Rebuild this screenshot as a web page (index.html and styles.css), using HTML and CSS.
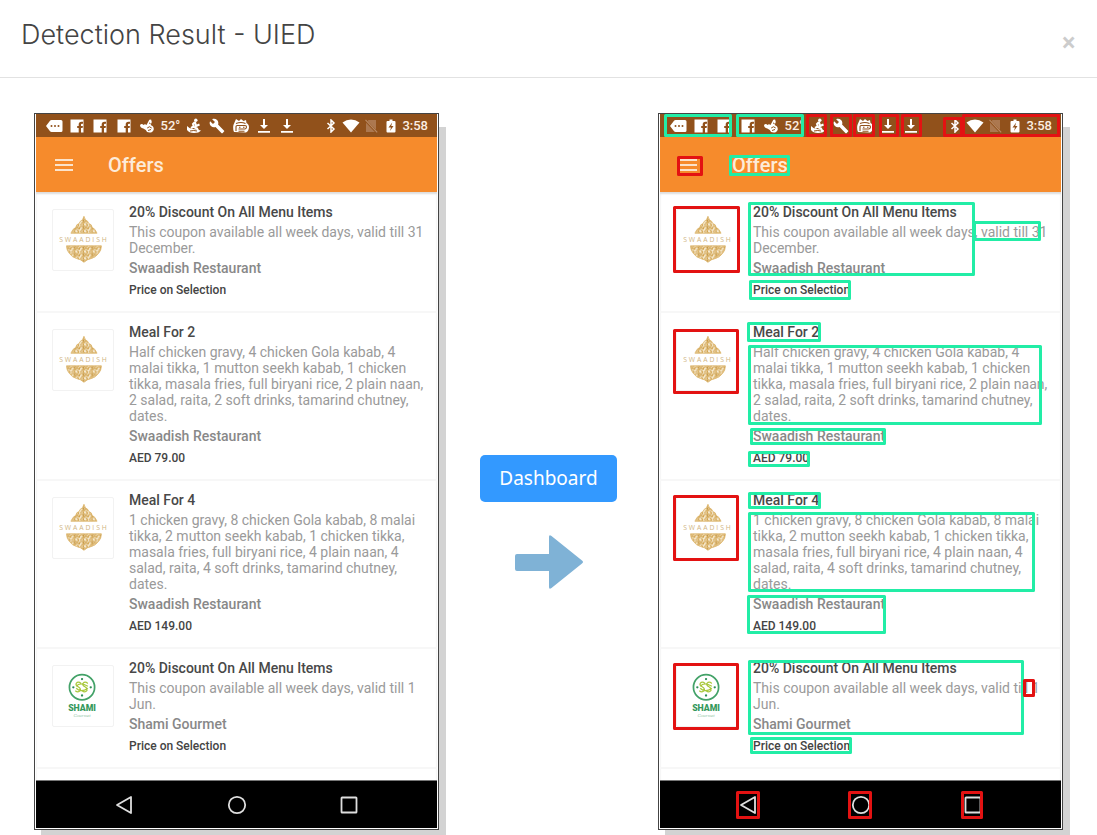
FILE: index.html
```html
<!DOCTYPE html>
<html lang="en">
<head>
<meta charset="utf-8">
<title>Detection Result - UIED</title>
<link rel="stylesheet" href="styles.css">
</head>
<body>
<svg class="sprite" aria-hidden="true">
  <defs>
    <pattern id="filigree" width="9" height="7" patternUnits="userSpaceOnUse">
      <rect width="9" height="7" fill="#f8edd6"/>
      <path d="M.5 6Q0 3.500 2.200 3t2 1.800-1.800 1M4.500.2Q4 2.500 6 3t2.500-1.200Q8.500.2 7 .8M5 6.800Q5 4.500 7 4.500t1.800 1.800M1 1.500q1.500-1.500 2.500 0" stroke="#d0a048" stroke-width="1.200" fill="none"/>
      <circle cx="4.700" cy="3.800" r=".7" fill="#b98a35"/>
      <circle cx="7" cy="6.200" r=".6" fill="#c7963c"/>
    </pattern>
  </defs>
  <symbol id="tag" viewBox="0 0 18 14"><path d="M1 7l4-5.200Q5.600 1 6.600 1H16q1.500 0 1.500 1.500v9q0 1.500-1.500 1.500H6.600Q5.600 13 5 12.200z" fill="#fff"/><g fill="#91511b"><circle cx="6.500" cy="7" r="1"/><circle cx="10" cy="7" r="1"/><circle cx="13.500" cy="7" r="1"/></g></symbol>
  <symbol id="fb" viewBox="0 0 14 14"><path d="M.5.5h13v13H11V9h1.600l.3-2H11V5.600q0-.9 1-.9h1V2.700h-1.600Q8.700 2.700 8.700 5.400V7H7.200v2h1.500v4.500H.5z" fill="#fff"/></symbol>
  <symbol id="blob" viewBox="0 0 16 16"><path d="M1 7Q2.800 5 4.500 7 6 5.500 7.500 7L10.300 1.800l1.800-.4L12.800 4l-1.200 3Q14.800 8 14.800 11.200 14 14.600 10.500 14.600 7.500 14.500 6.800 12L4.300 10.500Q1 9.500 1 7z" fill="#fff"/><path d="M8.200 10q2.300-2.500 4.500 0M9 12.500l3-1M10 5l1.500.5" stroke="#91511b" fill="none"/></symbol>
  <symbol id="surf" viewBox="0 0 16 16"><circle cx="9.800" cy="2.300" r="1.700" fill="#fff"/><path d="M9 4L7 6l.8 2.500L5 10M9 4l1 4 3.500-1.500M8 9l3 1.500 1 2" stroke="#fff" stroke-width="2" fill="none"/><path d="M1 8q2.500 3 6 3t8 1.500q-2 2.500-7 2.500T1 12z" fill="#fff"/><path d="M4 13q4-1 7 0" stroke="#91511b" fill="none"/></symbol>
  <symbol id="wrench" viewBox="0 0 24 24"><path fill="#fff" d="M22.700 19l-9.100-9.100c.9-2.300.4-5-1.500-6.900-2-2-5-2.400-7.400-1.300L9 6 6 9 1.600 4.700C.4 7.100.9 10.100 2.900 12.100c1.900 1.900 4.600 2.400 6.900 1.500l9.100 9.100c.4.4 1 .4 1.400 0l2.300-2.300c.5-.4.5-1.100.1-1.400z"/></symbol>
  <symbol id="face" viewBox="0 0 18 16"><path d="M2 14Q0 9 2.500 4.500L4 1l3 2 2-2 2.500 2L14 2l.5 3q2.500 1 2.500 4.500-.5 4-3 5z" fill="#fff"/><path d="M4 5.500q5-2 9.500 0M4 13V8.500q0-1 1.200-1H13q1.500 0 1.500 1.500T13 11H6.500M7 9.200h1.500M11 9.200h1.500M6.500 13.200h6" stroke="#91511b" stroke-width="1.100" fill="none"/></symbol>
  <symbol id="down" viewBox="0 0 14 16"><path d="M6 1h2v6h3L7 11 3 7h3zM1 13h12v1.700H1z" fill="#fff"/></symbol>
  <symbol id="bt" viewBox="0 0 10 14"><path d="M1.500 4L8 10l-3 3V1l3 3-6.500 6" stroke="#fff" stroke-width="1.500" fill="none"/></symbol>
  <symbol id="wifi" viewBox="0 0 18 14"><path d="M9 13.500L.5 3.500Q4.500.5 9 .5t8.500 3z" fill="#fff"/></symbol>
  <symbol id="nosim" viewBox="0 0 14 14"><path d="M4.500 1H12v12H2V4z" fill="#ac7850"/><path d="M1 1l12 12.500" stroke="#91511b" stroke-width="2.400"/><path d="M1.500.8l11.700 12.500" stroke="#b98a65" stroke-width="1.200"/></symbol>
  <symbol id="battery" viewBox="0 0 10 14"><path d="M3.500.5h3V2h2q1 0 1 1v9.500q0 1-1 1h-7q-1 0-1-1V3q0-1 1-1h2z" fill="#fff"/><path d="M6.200 3.500L2.500 8.500H5L4 12l3.500-5H5.200z" fill="#91511b"/></symbol>
  <symbol id="menu" viewBox="0 0 18 14"><path d="M0 2h18M0 7h18M0 12h18" stroke="#fbe3cb" stroke-width="2"/></symbol>
  <symbol id="back" viewBox="0 0 20 20"><path d="M17 2v16L3 10z" fill="none" stroke="#dedede" stroke-width="1.800" stroke-linejoin="round"/></symbol>
  <symbol id="home" viewBox="0 0 20 20"><circle cx="10" cy="10" r="8.200" fill="none" stroke="#dedede" stroke-width="1.800"/></symbol>
  <symbol id="recent" viewBox="0 0 20 20"><rect x="2.500" y="2.500" width="15" height="15" rx=".6" fill="none" stroke="#dedede" stroke-width="1.800"/></symbol>
  <symbol id="swaadish" viewBox="0 0 62 62">
    <path d="M32 6.500l1.500 3.500q3 1.500 3.500 4 3 .5 3.500 4 3 1 5 6h-27q2-5 5-6 .5-3.500 3.500-4 .5-2.500 3.500-4z" fill="url(#filigree)" stroke="#dcb469" stroke-width=".8"/>
    <path d="M14 37h36q0 5-3 8-3 4-7 5-5 1-8 4-3-3-8-4-4-1-7-5-3-3-3-8z" fill="url(#filigree)" stroke="#dcb469" stroke-width=".8"/>
  </symbol>
  <symbol id="shami" viewBox="0 0 62 62">
    <circle cx="30" cy="22" r="13" fill="none" stroke="#43a268" stroke-width="1.800"/>
    <path d="M29 18q-3-2.500-5 0-1 2 2 3.500t2 4q-2 2.500-5 0M36 18q-3-2.500-5 0-1 2 2 3.500t2 4q-2 2.500-5 0M24 21q4-5 12 0M24 23q5 5 12 0" fill="none" stroke="#a9c83c" stroke-width="1.300"/>
    <g fill="#2e8d55"><circle cx="30" cy="13.500" r="1.200"/><circle cx="30" cy="30.500" r="1.200"/><circle cx="21" cy="22" r="1.200"/><circle cx="39" cy="22" r="1.200"/></g>
  </symbol>
</svg>

<main class="modal">
  <header class="modal-header">
    <h1 class="modal-title">Detection Result - UIED</h1>
    <button class="close" type="button" aria-label="Close">×</button>
  </header>

  <div class="modal-body">
    <section class="phone" aria-label="Original screen">
      <div class="status">
        <div class="notices">
          <span><svg class="i18"><use href="#tag"/></svg></span>
          <span><svg class="i14"><use href="#fb"/></svg></span>
          <span><svg class="i14"><use href="#fb"/></svg></span>
          <span><svg class="i14"><use href="#fb"/></svg></span>
          <span><svg class="i16"><use href="#blob"/></svg></span>
          <span>52°</span>
          <span><svg class="i16"><use href="#surf"/></svg></span>
          <span><svg class="i16"><use href="#wrench"/></svg></span>
          <span><svg class="i18"><use href="#face"/></svg></span>
          <span><svg class="i16"><use href="#down"/></svg></span>
          <span><svg class="i16"><use href="#down"/></svg></span>
        </div>
        <div class="system">
          <span><svg class="i14"><use href="#bt"/></svg></span>
          <span><svg class="i18"><use href="#wifi"/></svg></span>
          <span><svg class="i14"><use href="#nosim"/></svg></span>
          <span><svg class="i14"><use href="#battery"/></svg></span>
          <time>3:58</time>
        </div>
      </div>
      <div class="appbar"><svg class="menu"><use href="#menu"/></svg><h2>Offers</h2></div>
      <div class="offers">
        <article class="offer">
          <svg class="thumb" viewBox="0 0 62 62"><use href="#swaadish"/><text class="logo-swaadish" x="32" y="33" text-anchor="middle">SWAADISH</text></svg>
          <div class="info">
            <h3>20% Discount On All Menu Items</h3>
            <p class="desc">This coupon available all week days, valid till 31<br>December.</p>
            <p class="place">Swaadish Restaurant</p>
            <p class="price">Price on Selection</p>
          </div>
        </article>
        <article class="offer">
          <svg class="thumb" viewBox="0 0 62 62"><use href="#swaadish"/><text class="logo-swaadish" x="32" y="33" text-anchor="middle">SWAADISH</text></svg>
          <div class="info">
            <h3>Meal For 2</h3>
            <p class="desc">Half chicken gravy, 4 chicken Gola kabab, 4<br>malai tikka, 1 mutton seekh kabab, 1 chicken<br>tikka, masala fries, full biryani rice, 2 plain naan,<br>2 salad, raita, 2 soft drinks, tamarind chutney,<br>dates.</p>
            <p class="place">Swaadish Restaurant</p>
            <p class="price">AED 79.00</p>
          </div>
        </article>
        <article class="offer">
          <svg class="thumb" viewBox="0 0 62 62"><use href="#swaadish"/><text class="logo-swaadish" x="32" y="33" text-anchor="middle">SWAADISH</text></svg>
          <div class="info">
            <h3>Meal For 4</h3>
            <p class="desc">1 chicken gravy, 8 chicken Gola kabab, 8 malai<br>tikka, 2 mutton seekh kabab, 1 chicken tikka,<br>masala fries, full biryani rice, 4 plain naan, 4<br>salad, raita, 4 soft drinks, tamarind chutney,<br>dates.</p>
            <p class="place">Swaadish Restaurant</p>
            <p class="price">AED 149.00</p>
          </div>
        </article>
        <article class="offer">
          <svg class="thumb" viewBox="0 0 62 62"><use href="#shami"/><text class="logo-shami" x="30" y="47" text-anchor="middle">SHAMI</text><text class="logo-gourmet" x="30" y="53" text-anchor="middle">Gourmet</text></svg>
          <div class="info">
            <h3>20% Discount On All Menu Items</h3>
            <p class="desc">This coupon available all week days, valid till 1<br>Jun.</p>
            <p class="place">Shami Gourmet</p>
            <p class="price">Price on Selection</p>
          </div>
        </article>
      </div>
      <div class="navbar">
        <svg><use href="#back"/></svg>
        <svg><use href="#home"/></svg>
        <svg><use href="#recent"/></svg>
      </div>
    </section>

    <div class="actions">
      <button class="dashboard" type="button">Dashboard</button>
      <svg class="arrow" viewBox="0 0 70 56" aria-hidden="true"><path d="M3 20H35V3Q35 0 37.500 2L68 26.500Q70 28 68 29.500L37.500 54Q35 56 35 53V37H3Q1 37 1 35V22Q1 20 3 20z" fill="#7fb2d6"/></svg>
    </div>

    <section class="phone" aria-label="Detected elements">
      <div class="status">
        <div class="notices">
          <span><svg class="i18"><use href="#tag"/></svg></span>
          <span><svg class="i14"><use href="#fb"/></svg></span>
          <span><svg class="i14"><use href="#fb"/></svg></span>
          <span><svg class="i14"><use href="#fb"/></svg></span>
          <span><svg class="i16"><use href="#blob"/></svg></span>
          <span>52°</span>
          <span><svg class="i16"><use href="#surf"/></svg></span>
          <span><svg class="i16"><use href="#wrench"/></svg></span>
          <span><svg class="i18"><use href="#face"/></svg></span>
          <span><svg class="i16"><use href="#down"/></svg></span>
          <span><svg class="i16"><use href="#down"/></svg></span>
        </div>
        <div class="system">
          <span><svg class="i14"><use href="#bt"/></svg></span>
          <span><svg class="i18"><use href="#wifi"/></svg></span>
          <span><svg class="i14"><use href="#nosim"/></svg></span>
          <span><svg class="i14"><use href="#battery"/></svg></span>
          <time>3:58</time>
        </div>
      </div>
      <div class="appbar"><svg class="menu"><use href="#menu"/></svg><h2>Offers</h2></div>
      <div class="offers">
        <article class="offer">
          <svg class="thumb" viewBox="0 0 62 62"><use href="#swaadish"/><text class="logo-swaadish" x="32" y="33" text-anchor="middle">SWAADISH</text></svg>
          <div class="info">
            <h3>20% Discount On All Menu Items</h3>
            <p class="desc">This coupon available all week days, valid till 31<br>December.</p>
            <p class="place">Swaadish Restaurant</p>
            <p class="price">Price on Selection</p>
          </div>
        </article>
        <article class="offer">
          <svg class="thumb" viewBox="0 0 62 62"><use href="#swaadish"/><text class="logo-swaadish" x="32" y="33" text-anchor="middle">SWAADISH</text></svg>
          <div class="info">
            <h3>Meal For 2</h3>
            <p class="desc">Half chicken gravy, 4 chicken Gola kabab, 4<br>malai tikka, 1 mutton seekh kabab, 1 chicken<br>tikka, masala fries, full biryani rice, 2 plain naan,<br>2 salad, raita, 2 soft drinks, tamarind chutney,<br>dates.</p>
            <p class="place">Swaadish Restaurant</p>
            <p class="price">AED 79.00</p>
          </div>
        </article>
        <article class="offer">
          <svg class="thumb" viewBox="0 0 62 62"><use href="#swaadish"/><text class="logo-swaadish" x="32" y="33" text-anchor="middle">SWAADISH</text></svg>
          <div class="info">
            <h3>Meal For 4</h3>
            <p class="desc">1 chicken gravy, 8 chicken Gola kabab, 8 malai<br>tikka, 2 mutton seekh kabab, 1 chicken tikka,<br>masala fries, full biryani rice, 4 plain naan, 4<br>salad, raita, 4 soft drinks, tamarind chutney,<br>dates.</p>
            <p class="place">Swaadish Restaurant</p>
            <p class="price">AED 149.00</p>
          </div>
        </article>
        <article class="offer">
          <svg class="thumb" viewBox="0 0 62 62"><use href="#shami"/><text class="logo-shami" x="30" y="47" text-anchor="middle">SHAMI</text><text class="logo-gourmet" x="30" y="53" text-anchor="middle">Gourmet</text></svg>
          <div class="info">
            <h3>20% Discount On All Menu Items</h3>
            <p class="desc">This coupon available all week days, valid till 1<br>Jun.</p>
            <p class="place">Shami Gourmet</p>
            <p class="price">Price on Selection</p>
          </div>
        </article>
      </div>
      <div class="navbar">
        <svg><use href="#back"/></svg>
        <svg><use href="#home"/></svg>
        <svg><use href="#recent"/></svg>
      </div>
      <!-- Bounding boxes: green for text, red for components -->
      <svg class="boxes" viewBox="660 114 401 714" aria-hidden="true">
        <g transform="translate(.5 .5)">
          <g class="component">
            <rect x="807" y="115" width="18" height="20"/>
            <rect x="831" y="115" width="19" height="20"/>
            <rect x="854" y="115" width="19" height="20"/>
            <rect x="880" y="115" width="17" height="20"/>
            <rect x="902" y="115" width="18" height="20"/>
            <rect x="944" y="118" width="17" height="17"/>
            <rect x="963" y="115" width="95" height="20"/>
            <rect x="678" y="157" width="23" height="17"/>
            <rect x="674" y="207" width="64" height="64"/>
            <rect x="674" y="330" width="63" height="62"/>
            <rect x="674" y="496" width="63" height="63"/>
            <rect x="674" y="664" width="63" height="64"/>
            <rect x="737" y="792" width="21" height="25"/>
            <rect x="849" y="792" width="21" height="25"/>
            <rect x="962" y="792" width="19" height="25"/>
          </g>
          <g class="text">
            <rect x="665" y="115" width="65" height="20"/>
            <rect x="737" y="115" width="65" height="20"/>
            <rect x="730" y="156" width="58" height="18"/>
            <rect x="749" y="203" width="224" height="71"/>
            <rect x="974" y="222" width="65" height="17"/>
            <rect x="750" y="281" width="99" height="17"/>
            <rect x="748" y="323" width="71" height="17"/>
            <rect x="749" y="346" width="291" height="77"/>
            <rect x="751" y="429" width="133" height="14"/>
            <rect x="749" y="452" width="59" height="13"/>
            <rect x="749" y="493" width="70" height="14"/>
            <rect x="749" y="513" width="284" height="77"/>
            <rect x="748" y="596" width="136" height="36"/>
            <rect x="749" y="661" width="273" height="72"/>
            <rect x="751" y="738" width="99" height="14"/>
          </g>
          <g class="component"><rect x="1024" y="680" width="9" height="15"/></g>
        </g>
      </svg>
    </section>
  </div>
</main>
</body>
</html>
```

FILE: styles.css
```css
* {
  box-sizing: border-box;
}

body,
h1,
h2,
h3,
p {
  margin: 0;
}

body {
  background: #fff;
  font-family: Roboto, "Noto Sans", sans-serif;
}

svg {
  display: block;
  flex: none;
}

.sprite {
  position: absolute;
  width: 0;
  height: 0;
}

.modal-header {
  display: flex;
  justify-content: space-between;
  align-items: flex-start;
  height: 78px;
  padding: 18px 21px;
  border-bottom: 1px solid #e2e2e2;
}

.modal-title {
  color: #444;
  font-family: Inter, "Open Sans", sans-serif;
  font-size: 27px;
  font-weight: 300;
  line-height: 34px;
}

.close {
  padding: 8px 0;
  border: 0;
  background: none;
  color: #ccc;
  font-family: "Open Sans", sans-serif;
  font-size: 26px;
  font-weight: 700;
  line-height: 32px;
}

.modal-body {
  display: flex;
  justify-content: space-between;
  align-items: flex-start;
  padding: 35px 34px 5px;
}

.phone {
  position: relative;
  flex: 0 0 405px;
  min-width: 0;
  padding: 0 1px 1px;
  border: 1px solid #444;
  background: #fff;
  box-shadow: 7px 14px #d3d3d3;
}

.status {
  display: flex;
  justify-content: space-between;
  height: 23px;
  padding: 0 9px 0 6px;
  background: #91511b;
  color: #fbeee2;
  font-size: 13px;
  font-weight: 500;
  line-height: 23px;
}

.notices {
  display: flex;
  width: 257px;
}

.notices span {
  display: flex;
  flex: 1 1 0;
  justify-content: center;
  align-items: center;
}

.system {
  display: flex;
}

.system span {
  display: flex;
  justify-content: center;
  align-items: center;
  width: 20px;
}

.system time {
  padding-left: 1px;
}

.i14 {
  width: 14px;
  height: 14px;
}

.i16 {
  width: 16px;
  height: 16px;
}

.i18 {
  width: 18px;
  height: 16px;
}

.appbar {
  display: flex;
  align-items: center;
  gap: 35px;
  height: 55px;
  padding: 0 19px;
  background: #f68b2c;
  color: #fdebd9;
}

.appbar h2 {
  font-size: 20px;
  font-weight: 500;
  line-height: 24px;
}

.menu {
  width: 18px;
  height: 14px;
}

.offers {
  padding: 1px 0 11px;
  box-shadow: inset 0 2px 2px #ddd;
}

.offer {
  display: flex;
  gap: 15px;
  padding: 11px 0 13px 16px;
  border-bottom: 2px solid #f7f7f7;
}

.thumb {
  width: 62px;
  height: 62px;
  margin-top: 5px;
  border: 1px solid #f2f2f2;
  border-radius: 2px;
}

.info {
  flex: 1;
  min-width: 0;
}

.offer h3,
.offer p {
  font-size: 14px;
  line-height: 16px;
  white-space: nowrap;
}

.offer h3 {
  color: #484848;
  font-weight: 500;
}

.offer .desc {
  margin: 4px 0;
  color: #9a9a9a;
}

.offer .place {
  color: #888;
  font-weight: 500;
}

.offer .price {
  margin-top: 6px;
  color: #444;
  font-size: 12px;
  font-weight: 500;
}

.navbar {
  display: flex;
  justify-content: space-between;
  align-items: center;
  height: 48px;
  padding: 0 78px;
  border-top: 1px solid #777;
  background: #000;
}

.navbar svg {
  width: 20px;
  height: 20px;
}

.boxes {
  position: absolute;
  top: 0;
  left: 1px;
  width: 401px;
  height: 714px;
}

.boxes rect {
  fill: none;
  stroke-width: 3;
  stroke-linejoin: round;
}

.component {
  stroke: #e31212;
}

.text {
  stroke: #22eda6;
}

.logo-swaadish {
  fill: #cfb583;
  font-family: "Open Sans", sans-serif;
  font-size: 7px;
  letter-spacing: 2px;
}

.logo-shami {
  fill: #35985c;
  font-family: Roboto, sans-serif;
  font-size: 9px;
  font-weight: 900;
}

.logo-gourmet {
  fill: #8fc5a4;
  font-family: "Liberation Serif", serif;
  font-size: 5px;
  font-style: italic;
}

.actions {
  display: flex;
  flex-direction: column;
  align-items: center;
  align-self: center;
  gap: 32px;
  padding-top: 102px;
}

.dashboard {
  padding: 10px 19px;
  border: 0;
  border-radius: 5px;
  background: #3399ff;
  color: #fff;
  font-family: "Noto Sans", sans-serif;
  font-size: 19px;
  line-height: 27px;
}

.arrow {
  width: 70px;
  height: 56px;
}
```
